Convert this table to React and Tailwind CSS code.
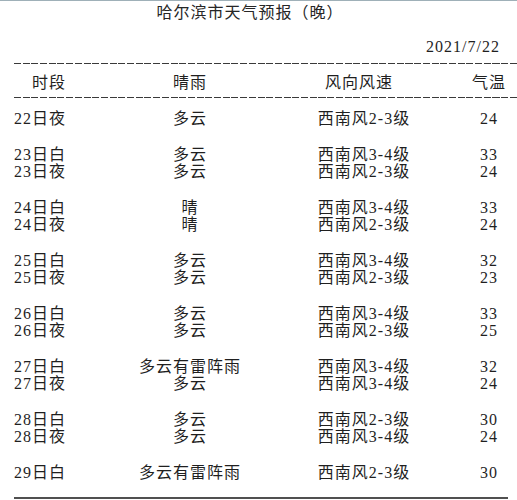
import React from 'react';

const groups = [
  [['22日夜', '多云', '西南风2-3级', '24']],
  [['23日白', '多云', '西南风3-4级', '33'], ['23日夜', '多云', '西南风2-3级', '24']],
  [['24日白', '晴', '西南风3-4级', '33'], ['24日夜', '晴', '西南风2-3级', '24']],
  [['25日白', '多云', '西南风3-4级', '32'], ['25日夜', '多云', '西南风2-3级', '23']],
  [['26日白', '多云', '西南风3-4级', '33'], ['26日夜', '多云', '西南风2-3级', '25']],
  [['27日白', '多云有雷阵雨', '西南风3-4级', '32'], ['27日夜', '多云', '西南风3-4级', '24']],
  [['28日白', '多云', '西南风2-3级', '30'], ['28日夜', '多云', '西南风3-4级', '24']],
  [['29日白', '多云有雷阵雨', '西南风2-3级', '30']],
];

const cols = 'grid grid-cols-[100px_152px_196px_54px] ml-[14px]';

const Dashes = ({ className }) => (
  <div
    className={`ml-[14px] h-px bg-[repeating-linear-gradient(to_right,#3a3a3a_0_7px,transparent_7px_8.7px)] ${className}`}
  />
);

const Row = ({ row }) => (
  <div className={`${cols} h-[17px]`}>
    <div className="text-left">{row[0]}</div>
    <div className="text-center">{row[1]}</div>
    <div className="text-center">{row[2]}</div>
    <div className="text-center">{row[3]}</div>
  </div>
);

export default function App() {
  return (
    <div className="w-[517px] h-[500px] bg-white border-t border-[#9fb0b8] overflow-hidden text-[#1f1f1f] text-[16px] tracking-[1px] leading-[17px] font-['Liberation_Serif','Noto_Sans_CJK_SC',serif]">
      <div className="w-[500px] mt-[3px] text-center text-[#262626]">哈尔滨市天气预报（晚）</div>

      <div className="w-[500px] mt-[17px] text-right">2021/7/22</div>

      <Dashes className="mt-[8px]" />

      <div className={`${cols} mt-[10px] h-[17px]`}>
        <div className="pl-[18px]">时段</div>
        <div className="text-center">晴雨</div>
        <div className="text-center pr-[10px]">风向风速</div>
        <div className="text-center">气温</div>
      </div>

      <Dashes className="mt-[6px]" />

      <div className="mt-[12px] flex flex-col gap-[19px]">
        {groups.map((g, i) => (
          <div key={i}>
            {g.map((row) => (
              <Row key={row[0]} row={row} />
            ))}
          </div>
        ))}
      </div>

      <div className="ml-[14px] mt-[16px] w-[494px] h-[2px] bg-[#505050]" />
    </div>
  );
}
